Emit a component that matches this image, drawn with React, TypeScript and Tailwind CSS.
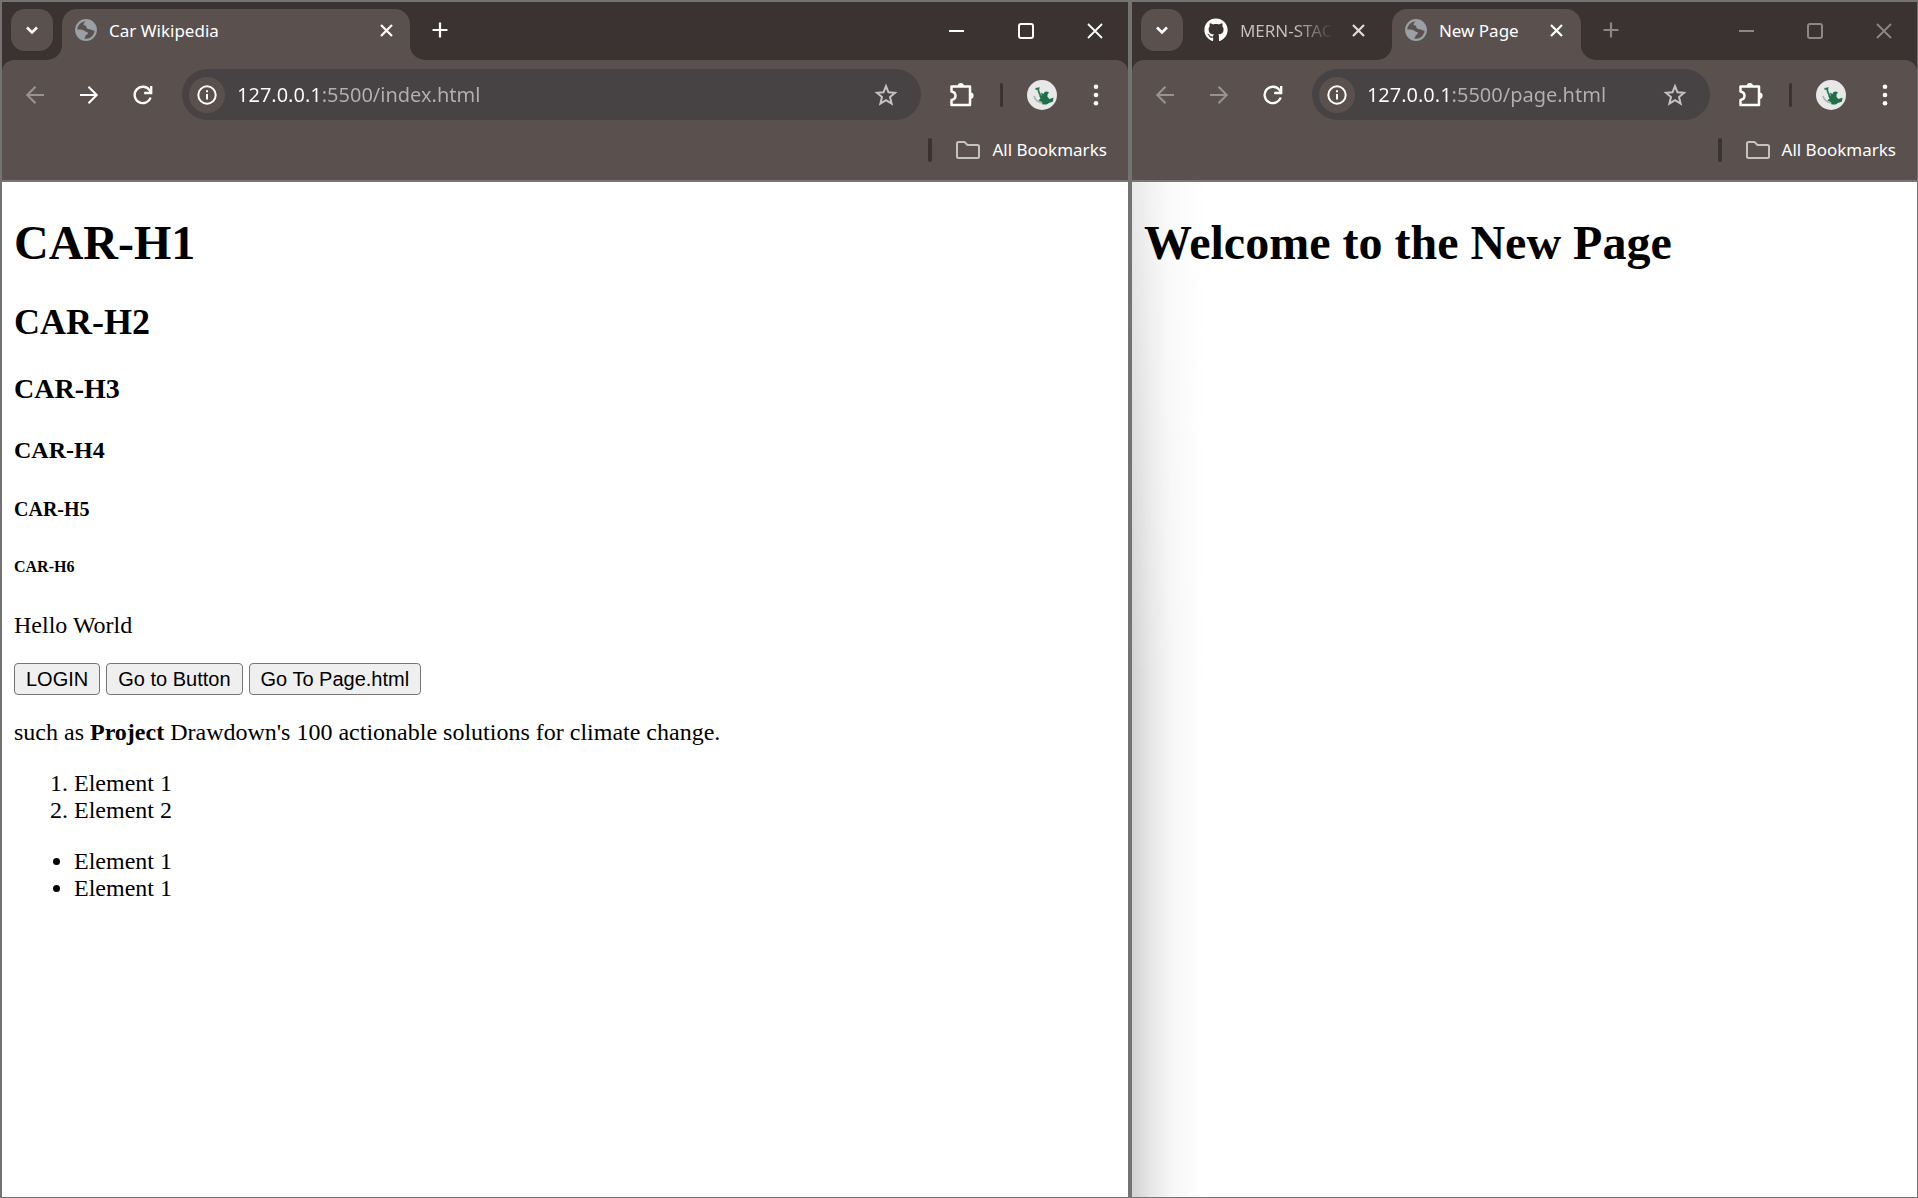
import { FaGithub } from "react-icons/fa";

const chromeFont = "font-['Noto_Sans','Open_Sans',sans-serif]";

function Chevron() {
  return (
    <svg width="14" height="14" viewBox="0 0 14 14" fill="none" stroke="currentColor" strokeWidth="2.6" aria-hidden="true">
      <path d="M2 4.5 7 9.5 12 4.5" />
    </svg>
  );
}

function Cross({ size, stroke }: { size: number; stroke: number }) {
  return (
    <svg width={size} height={size} viewBox={`0 0 ${size} ${size}`} fill="none" stroke="currentColor" strokeWidth={stroke} aria-hidden="true">
      <path d={`M1 1 ${size - 1} ${size - 1}M${size - 1} 1 1 ${size - 1}`} />
    </svg>
  );
}

function Plus() {
  return (
    <svg width="16" height="16" viewBox="0 0 16 16" fill="none" stroke="currentColor" strokeWidth="2.2" aria-hidden="true">
      <path d="M8 0.5v15M0.5 8h15" />
    </svg>
  );
}

function Globe() {
  return (
    <svg width="22" height="22" viewBox="0 0 22 22" className="text-[#9aa0a6]" aria-hidden="true">
      <circle cx="11" cy="11" r="9.800" fill="none" stroke="currentColor" strokeWidth="2.200" />
      <path
        fill="currentColor"
        d="M11 1C10.500 3 9 3.500 8.500 5C8.200 6.200 9.500 6.500 10.800 6.500C11.500 7.500 11 8.500 12 9.500C13.500 10.500 15.500 10 17 11C18.500 12 20 12 21 11C21 5 17 1 11 1Z"
      />
      <path
        fill="currentColor"
        d="M1 10.500C4 10.500 7 10 9 11.500C10 12.800 12.500 12.500 13 14C13 15.500 11 15.500 10.500 17C10 18.500 9.500 19.500 8.500 20.700C4 19.500 1 16 1 10.500Z"
      />
    </svg>
  );
}

function Puzzle() {
  return (
    <svg width="26" height="26" viewBox="0 0 26 26" aria-hidden="true">
      <path
        d="M2.500 4.500H21V23H2.500V18C5.500 17.500 6.500 15.800 6.500 13.800S5.500 10 2.500 9.500Z"
        fill="none"
        stroke="currentColor"
        strokeWidth="2.500"
        strokeLinejoin="round"
      />
      <path d="M8.700 4A3.100 3.100 0 0 1 14.900 4ZM21.500 10.600A3.100 3.100 0 0 1 21.500 16.800Z" fill="currentColor" />
    </svg>
  );
}

function Arrow({ flip }: { flip?: boolean }) {
  return (
    <svg width="20" height="20" viewBox="0 0 20 20" fill="none" stroke="currentColor" strokeWidth="2.1" className={flip ? "rotate-180" : ""} aria-hidden="true">
      <path d="M19 10H2.500M10.500 1.800 2.300 10l8.200 8.200" />
    </svg>
  );
}

function Reload() {
  return (
    <svg width="22" height="22" viewBox="0 0 22 22" fill="none" stroke="currentColor" strokeWidth="2.300" aria-hidden="true">
      <path d="M18.600 13.500A8.200 8.200 0 1 1 17.500 6.200L19 8.300" />
      <path d="M19.200 2v7h-7" />
    </svg>
  );
}

function Info() {
  return (
    <svg width="20" height="20" viewBox="0 0 20 20" fill="none" stroke="currentColor" strokeWidth="2" aria-hidden="true">
      <circle cx="10" cy="10" r="8.700" />
      <path d="M10 9v5.500M10 5.300v2" />
    </svg>
  );
}

function Star() {
  return (
    <svg width="24" height="24" viewBox="0 0 24 24" fill="none" stroke="currentColor" strokeWidth="2" aria-hidden="true">
      <path d="M12 3.200 14.500 9.300 21 9.800 16 14.100 17.600 20.600 12 17.100 6.400 20.600 8 14.100 3 9.800 9.500 9.300Z" />
    </svg>
  );
}

function Folder() {
  return (
    <svg width="24" height="18" viewBox="0 0 24 18" fill="none" stroke="currentColor" strokeWidth="2" strokeLinejoin="round" aria-hidden="true">
      <path d="M1 15.500V2.500Q1 1 2.500 1H8.500L11.500 4H21.500Q23 4 23 5.500V15.500Q23 17 21.500 17H2.500Q1 17 1 15.500Z" />
    </svg>
  );
}

function Dots() {
  return (
    <svg width="6" height="22" viewBox="0 0 6 22" fill="currentColor" aria-hidden="true">
      <circle cx="3" cy="2.700" r="2.300" />
      <circle cx="3" cy="11" r="2.300" />
      <circle cx="3" cy="19.300" r="2.300" />
    </svg>
  );
}

function Avatar() {
  return (
    <svg width="30" height="30" viewBox="0 0 30 30" aria-hidden="true">
      <circle cx="15" cy="15" r="15" fill="#e8e8e8" />
      <path d="M7 16C8 20 11 22 15 23" fill="none" stroke="#aab3ae" strokeWidth="1.500" />
      <path d="M8.500 9 11.500 8.500C10.500 11 12.500 14 14.500 17" fill="none" stroke="#2b7a52" strokeWidth="1.800" />
      <path
        d="M14 12.500 16.500 14 17.500 12 20 11.500 22 12.500 20.500 14.500 20.500 17 22.500 19 24 18.500 26.500 17.500 26 21.500 22 23 19.500 24.500 15.500 24.500 15 22 11.500 20.500 13.500 18.500 12 15.500 15 16.500Z"
        fill="#1f7048"
      />
    </svg>
  );
}

function WindowControls({ active }: { active: boolean }) {
  return (
    <div className={`flex gap-[25px] pr-[11px] ${active ? "text-white" : "text-[#8c8786]"}`}>
      <button aria-label="Minimize" className="grid h-11 w-11 place-items-center">
        <span className="h-[2px] w-[15px] bg-current" />
      </button>
      <button aria-label="Maximize" className="grid h-11 w-11 place-items-center">
        <span className="h-4 w-4 rounded-[3px] border-2 border-current" />
      </button>
      <button aria-label="Close window" className="grid h-11 w-11 place-items-center">
        <Cross size={16} stroke={1.8} />
      </button>
    </div>
  );
}

function Foot({ side }: { side: "left" | "right" }) {
  return (
    <svg
      width="15"
      height="15"
      viewBox="0 0 15 15"
      aria-hidden="true"
      className={side === "left" ? "absolute right-full bottom-0" : "absolute bottom-0 left-full"}
    >
      <path d={side === "left" ? "M15 0A15 15 0 0 1 0 15H15Z" : "M0 0A15 15 0 0 0 15 15H0Z"} fill="#5a514f" />
    </svg>
  );
}

function ActiveTab({ title, className }: { title: string; className: string }) {
  return (
    <div className={`relative flex h-[51px] items-center rounded-t-[15px] bg-[#5a514f] pb-[9px] pl-[13px] ${className}`}>
      <Foot side="left" />
      <Globe />
      <span className="ml-3 flex-1 pt-[2px] text-[17px] leading-6 text-white">{title}</span>
      <button aria-label={`Close ${title}`} className="grid h-6 w-6 place-items-center text-white">
        <Cross size={13} stroke={2.2} />
      </button>
      <Foot side="right" />
    </div>
  );
}

function TabSearch() {
  return (
    <button aria-label="Search tabs" className="grid h-[42px] w-[42px] place-items-center rounded-[14px] bg-[#5a514f] text-white">
      <Chevron />
    </button>
  );
}

function NewTab({ active }: { active: boolean }) {
  return (
    <button aria-label="New tab" className={`ml-[18px] grid h-[42px] w-6 place-items-center ${active ? "text-white" : "text-[#8c8786]"}`}>
      <Plus />
    </button>
  );
}

function Toolbar({ url, label, canForward }: { url: string; label: string; canForward: boolean }) {
  return (
    <div className="flex h-[69px] items-center pr-[14px]">
      <div className="flex gap-[18px] pl-[15px] text-white">
        <button aria-label="Back" className="grid h-9 w-9 place-items-center text-[#989392]"><Arrow /></button>
        <button aria-label="Forward" className={`grid h-9 w-9 place-items-center ${canForward ? "" : "text-[#989392]"}`}><Arrow flip /></button>
        <button aria-label="Reload" className="grid h-9 w-9 place-items-center"><Reload /></button>
      </div>
      <div className="ml-[21px] flex h-[51px] min-w-0 flex-1 items-center rounded-full bg-[#474344] px-[7px]">
        <button aria-label="Site information" className="grid h-9 w-9 shrink-0 place-items-center rounded-full bg-[#5a514f] text-white"><Info /></button>
        <input
          aria-label={label}
          defaultValue={url}
          className="ml-3 h-8 min-w-0 flex-1 bg-[linear-gradient(to_right,#fff_81px,#b3b0b0_81px)] bg-clip-text text-[20px] text-transparent outline-none"
        />
        <button aria-label="Bookmark this page" className="mr-[10px] grid h-9 w-9 shrink-0 place-items-center text-[#c5c2c2]"><Star /></button>
      </div>
      <button aria-label="Extensions" className="ml-[23px] grid h-9 w-9 place-items-center text-white"><Puzzle /></button>
      <span className="ml-5 h-6 w-[3px] rounded-full bg-[#3a3332]" />
      <button aria-label="Profile" className="ml-[21px] grid h-9 w-9 place-items-center"><Avatar /></button>
      <button aria-label="Menu" className="ml-[18px] grid h-9 w-9 place-items-center text-white"><Dots /></button>
    </div>
  );
}

function Bookmarks() {
  return (
    <div className="flex h-[51px] items-center justify-end pr-[21px] pb-[9px]">
      <span className="h-6 w-1 rounded-full bg-[#3a3332]" />
      <button className="ml-6 flex items-center gap-3 text-[17px] leading-6 text-white">
        <span className="text-[#c5c2c2]"><Folder /></span>
        All Bookmarks
      </button>
    </div>
  );
}

const pageButton = "h-8 rounded-[4px] border border-[#767676] bg-[#efefef] px-[11px] text-[20px] leading-6 font-['Liberation_Sans',Arial,sans-serif]";

export default function App() {
  return (
    <div className="flex min-h-screen bg-white text-black">
      <section aria-label="Car Wikipedia window" className="flex min-w-0 flex-[1130] flex-col border-2 border-b border-[#737373]">
        <header className={`bg-[#3a3332] ${chromeFont}`}>
          <div className="flex h-[58px] items-start pt-[7px] pl-[9px]">
            <TabSearch />
            <ActiveTab title="Car Wikipedia" className="ml-[9px] w-[348px] pr-3" />
            <NewTab active />
            <div className="ml-auto"><WindowControls active /></div>
          </div>
          <div className="rounded-t-[12px] border-b-2 border-[#7b7573] bg-[#5a514f]">
            <Toolbar url="127.0.0.1:5500/index.html" label="Address, first window" canForward />
            <Bookmarks />
          </div>
        </header>
        <main className="flex flex-1 flex-col px-3 pt-[33px] font-['Liberation_Serif','Times_New_Roman',serif] text-[24px] leading-[27px]">
          <h1 className="text-[48px] leading-[55px] font-bold">CAR-H1</h1>
          <h2 className="mt-8 text-[36px] leading-[41px] font-bold">CAR-H2</h2>
          <h3 className="mt-[30px] text-[28px] leading-8 font-bold">CAR-H3</h3>
          <h4 className="mt-8 text-[24px] leading-[27px] font-bold">CAR-H4</h4>
          <h5 className="mt-[34px] text-[20px] leading-[23px] font-bold">CAR-H5</h5>
          <h6 className="mt-[37px] text-[16px] leading-[18px] font-bold">CAR-H6</h6>
          <p className="mt-9">Hello World</p>
          <div className="mt-6 flex gap-[6px]">
            <button className={pageButton}>LOGIN</button>
            <button className={pageButton}>Go to Button</button>
            <button className={pageButton}>Go To Page.html</button>
          </div>
          <p className="mt-6">such as <b>Project</b> Drawdown's 100 actionable solutions for climate change.</p>
          <ol className="mt-6 list-decimal pl-[60px]">
            <li>Element 1</li>
            <li>Element 2</li>
          </ol>
          <ul className="mt-6 list-disc pl-[60px]">
            <li>Element 1</li>
            <li>Element 1</li>
          </ul>
        </main>
      </section>

      <section aria-label="New Page window" className="flex min-w-0 flex-[788] flex-col border-t-2 border-r border-b border-l-2 border-[#737373]">
        <header className={`bg-[#3a3332] ${chromeFont}`}>
          <div className="flex h-[58px] items-start pt-[7px] pl-[9px]">
            <TabSearch />
            <div className="ml-[9px] flex h-[42px] w-[200px] items-center pl-3">
              <FaGithub size={24} className="text-white" />
              <span className="ml-3 bg-linear-to-r from-[#c5c2c2] from-60% to-transparent bg-clip-text pt-[2px] text-[17px] leading-6 whitespace-nowrap text-transparent">MERN-STAC</span>
              <button aria-label="Close MERN-STAC" className="mr-[21px] ml-auto grid h-6 w-6 place-items-center text-[#dedcdc]">
                <Cross size={13} stroke={2.2} />
              </button>
            </div>
            <ActiveTab title="New Page" className="w-[189px] pr-3" />
            <NewTab active={false} />
            <div className="ml-auto"><WindowControls active={false} /></div>
          </div>
          <div className="rounded-t-[12px] border-b-2 border-[#7b7573] bg-[#5a514f]">
            <Toolbar url="127.0.0.1:5500/page.html" label="Address, second window" canForward={false} />
            <Bookmarks />
          </div>
        </header>
        <main className="flex-1 bg-[linear-gradient(to_bottom,rgba(255,255,255,0.5),transparent_500px),linear-gradient(to_right,#d2d2d2,#e6e6e6_18px,#f6f6f6_38px,#fff_72px)] px-3 pt-[33px] font-['Liberation_Serif','Times_New_Roman',serif]">
          <h1 className="text-[48px] leading-[55px] font-bold">Welcome to the New Page</h1>
        </main>
      </section>
    </div>
  );
}
